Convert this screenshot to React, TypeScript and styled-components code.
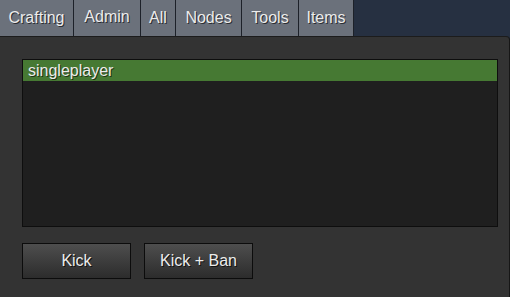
import React from "react"
import styled, { createGlobalStyle } from "styled-components"

const GlobalStyle = createGlobalStyle`
  html, body {
    margin: 0;
    padding: 0;
    background: #263041;
    width: 510px;
    height: 297px;
    overflow: hidden;
  }
  body {
    font-family: "Liberation Sans", Arial, sans-serif;
  }
`

const tabs = [
  { label: "Crafting", width: 74 },
  { label: "Admin", width: 67, active: true },
  { label: "All", width: 35 },
  { label: "Nodes", width: 66 },
  { label: "Tools", width: 57 },
  { label: "Items", width: 55 },
]

const App = () => {
  return (
    <>
      <GlobalStyle />
      <Window>
        <TabBar>
          {tabs.map(tab => (
            <Tab key={tab.label} $width={tab.width} $active={tab.active}>
              {tab.label}
            </Tab>
          ))}
        </TabBar>
        <Panel>
          <PlayerList>
            <PlayerRow $selected>singleplayer</PlayerRow>
          </PlayerList>
          <ButtonRow>
            <Button $width={109}>Kick</Button>
            <Button $width={109}>Kick + Ban</Button>
          </ButtonRow>
        </Panel>
      </Window>
    </>
  )
}

export default App

const Window = styled.div`
  display: flex;
  flex-direction: column;
  width: 510px;
  height: 297px;
`

const TabBar = styled.div`
  display: flex;
  height: 36px;
`

const Tab = styled.div<{ $width: number; $active?: boolean }>`
  box-sizing: border-box;
  width: ${p => p.$width}px;
  height: 36px;
  display: flex;
  align-items: center;
  justify-content: center;
  padding-bottom: ${p => (p.$active ? "3px" : "0")};
  background: #6b717b;
  border-right: 1px solid #1d2129;
  color: #ececec;
  font-size: 16px;
  text-shadow: 1px 1px 0 #2a2d33;
`

const Panel = styled.div`
  flex: 1;
  box-sizing: border-box;
  background: #333333;
  border-top: 1px solid #1c1c1c;
  border-right: 1px solid #161616;
  border-top-right-radius: 4px;
  padding: 22px 0 0 22px;
  display: flex;
  flex-direction: column;
  gap: 16px;
`

const PlayerList = styled.div`
  box-sizing: border-box;
  width: 476px;
  height: 168px;
  background: #1f1f1f;
  border: 1px solid #0e0e0e;
`

const PlayerRow = styled.div<{ $selected?: boolean }>`
  height: 21px;
  line-height: 21px;
  padding-left: 5px;
  background: ${p => (p.$selected ? "#467933" : "transparent")};
  color: #ececec;
  font-size: 16px;
  text-shadow: 1px 1px 0 #1e3315;
`

const ButtonRow = styled.div`
  display: flex;
  gap: 13px;
`

const Button = styled.div<{ $width: number }>`
  box-sizing: border-box;
  width: ${p => p.$width}px;
  height: 36px;
  display: flex;
  align-items: center;
  justify-content: center;
  background: linear-gradient(#4e4e4e, #2c2c2c);
  border: 1px solid #0c0c0c;
  color: #ececec;
  font-size: 16px;
  text-shadow: 1px 1px 0 #111;
`
